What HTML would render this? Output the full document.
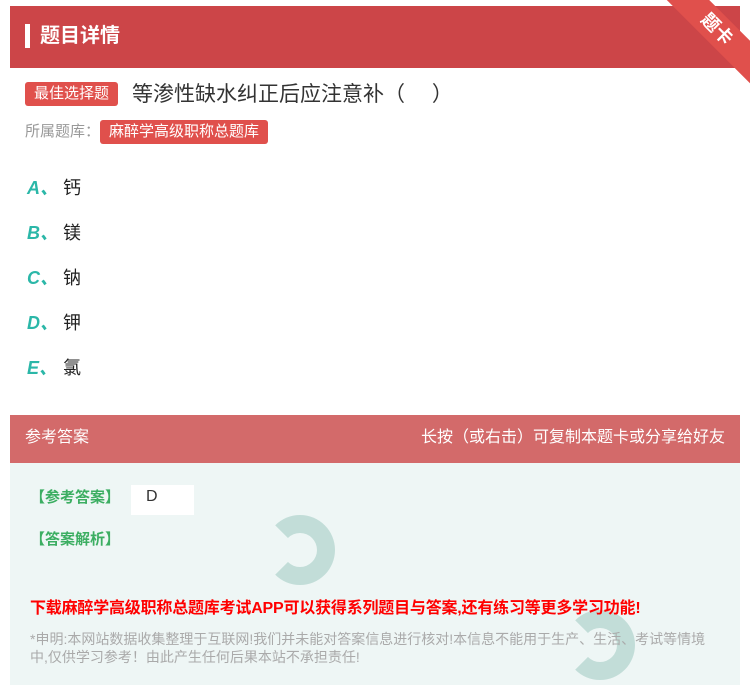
<!DOCTYPE html>
<html><head><meta charset="utf-8"><style>
*{margin:0;padding:0;box-sizing:border-box}
body{width:750px;height:685px;background:#fff;font-family:"Liberation Sans","Noto Sans CJK SC",sans-serif;position:relative;overflow:hidden}
.hdr{position:absolute;left:10px;top:6px;width:730px;height:62px;background:#cc4548}
.hdr .bar{position:absolute;left:15px;top:18px;width:5px;height:24px;background:#fff}
.hdr .t{position:absolute;left:30px;top:13px;color:#fff;font-size:20px;font-weight:bold}
.rib{position:absolute;right:-32px;top:14px;width:130px;height:30px;background:#e0504c;transform:rotate(45deg);color:#fff;font-size:18px;text-align:center;line-height:30px;font-weight:bold}
.tag{display:inline-block;background:#e0504c;color:#fff;border-radius:3px;font-size:15px;padding:0 9px;height:24px;line-height:24px}
.q{position:absolute;left:25px;top:78px;font-size:21px;color:#333}
.q .tag{vertical-align:3px;margin-right:14px}
.lib{position:absolute;left:25px;top:120px;font-size:15px;color:#999}
.opt{position:absolute;left:27px;font-size:18px;color:#222}
.opt b{color:#2bb7a8;font-style:italic;display:inline-block;width:36px}
.ans{position:absolute;left:10px;top:415px;width:730px;height:270px;background:#eef6f5}
.ah{height:48px;background:#d36a6a;color:#fff;font-size:16px;line-height:46px;padding:0 15px;display:flex;justify-content:space-between}
.g{position:absolute;left:20px;color:#3cae62;font-size:15px;font-weight:bold}
.red{position:absolute;left:20px;top:179px;color:#f00;font-size:16px;font-weight:bold;letter-spacing:-0.2px;white-space:nowrap}
.gray{position:absolute;left:20px;top:215px;width:690px;color:#aaa;font-size:14px;line-height:18px}
.sw{position:absolute;width:70px;height:70px;border-radius:50%;border:18px solid #b8d8d2;border-left-color:transparent;opacity:.8}
</style></head><body>
<div class="hdr"><div class="bar"></div><div class="t">题目详情</div></div>
<div class="rib">题卡</div>
<div class="q"><span class="tag">最佳选择题</span>等渗性缺水纠正后应注意补（　 ）</div>
<div class="lib">所属题库：<span class="tag">麻醉学高级职称总题库</span></div>
<div class="opt" style="top:174px"><b>A、</b>钙</div>
<div class="opt" style="top:219px"><b>B、</b>镁</div>
<div class="opt" style="top:264px"><b>C、</b>钠</div>
<div class="opt" style="top:309px"><b>D、</b>钾</div>
<div class="opt" style="top:354px"><b>E、</b>氯</div>
<div class="ans">
<div class="ah"><span>参考答案</span><span>长按（或右击）可复制本题卡或分享给好友</span></div>
<div class="sw" style="left:255px;top:100px"></div>
<div class="sw" style="left:555px;top:195px"></div>
<div class="g" style="top:71px">【参考答案】</div>
<div style="position:absolute;left:121px;top:70px;width:63px;height:30px;background:#fff;color:#333;font-size:16px;padding:3px 0 0 15px">D</div>
<div class="g" style="top:113px">【答案解析】</div>
<div class="red">下载麻醉学高级职称总题库考试APP可以获得系列题目与答案,还有练习等更多学习功能!</div>
<div class="gray">*申明:本网站数据收集整理于互联网!我们并未能对答案信息进行核对!本信息不能用于生产、生活、考试等情境中,仅供学习参考！由此产生任何后果本站不承担责任!</div>
</div>
</body></html>
